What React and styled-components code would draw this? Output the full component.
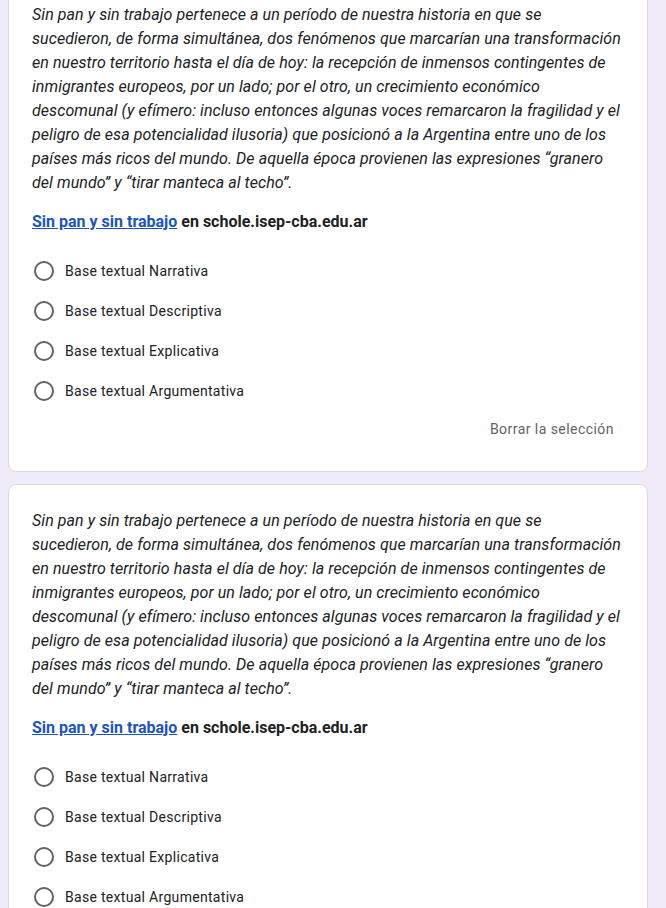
import React from "react";
import styled, { createGlobalStyle } from "styled-components";

const Global = createGlobalStyle`
	html, body {
		margin: 0;
		padding: 0;
		background: #f0ebf8;
		font-family: Roboto, "Noto Sans", Arial, sans-serif;
		overflow: hidden;
	}
`;

const Page = styled.div`
	display: flex;
	flex-direction: column;
	gap: 12px;
	width: 640px;
	margin: -22px 0 0 8px; /* la primera tarjeta viene cortada arriba */
`;

const Card = styled.div`
	background: #fff;
	border: 1px solid #dadce0;
	border-radius: 8px;
	padding: 24px 23px 0 23px;
	box-sizing: border-box;
`;

const Passage = styled.p`
	margin: 0;
	font-size: 16px;
	line-height: 24px;
	font-style: italic;
	color: #202124;
	letter-spacing: 0.07px;
`;

const Source = styled.div`
	margin-top: 15px;
	font-size: 16px;
	line-height: 24px;
	font-weight: 700;
	color: #202124;
`;

const Link = styled.a`
	color: #1a53c6;
	text-decoration: underline;
`;

const Options = styled.div`
	display: flex;
	flex-direction: column;
	margin-top: 17px;
`;

const Option = styled.label`
	display: flex;
	align-items: center;
	height: 40px;
	padding-left: 2px;
	font-size: 14px;
	color: #202124;
	letter-spacing: 0.3px;
	cursor: pointer;
`;

const Radio = styled.span`
	width: 20px;
	height: 20px;
	border: 2px solid #5f6368;
	border-radius: 50%;
	box-sizing: border-box;
	margin-right: 11px;
	flex-shrink: 0;
`;

const Footer = styled.div`
	display: flex;
	justify-content: flex-end;
	padding: 2px 10px 26px 0;
`;

const ClearButton = styled.button`
	border: none;
	background: transparent;
	font-family: inherit;
	font-size: 14px;
	font-weight: 400;
	letter-spacing: 0.45px;
	color: #5f6368;
	padding: 8px 0;
	cursor: pointer;
`;

const text = "Sin pan y sin trabajo pertenece a un período de nuestra historia en que se sucedieron, de forma simultánea, dos fenómenos que marcarían una transformación en nuestro territorio hasta el día de hoy: la recepción de inmensos contingentes de inmigrantes europeos, por un lado; por el otro, un crecimiento económico descomunal (y efímero: incluso entonces algunas voces remarcaron la fragilidad y el peligro de esa potencialidad ilusoria) que posicionó a la Argentina entre uno de los países más ricos del mundo. De aquella época provienen las expresiones “granero del mundo” y “tirar manteca al techo”.";

const choices = [
	"Base textual Narrativa",
	"Base textual Descriptiva",
	"Base textual Explicativa",
	"Base textual Argumentativa",
];

const Question = () => (
	<Card>
		<Passage>{text}</Passage>
		<Source>
			<Link href="#">Sin pan y sin trabajo</Link> en schole.isep-cba.edu.ar
		</Source>
		<Options>
			{choices.map((c) => (
				<Option key={c}>
					<Radio />
					{c}
				</Option>
			))}
		</Options>
		<Footer>
			<ClearButton>Borrar la selección</ClearButton>
		</Footer>
	</Card>
);

const App = () => {
	return (
		<>
			<Global />
			<Page>
				<Question />
				<Question />
			</Page>
		</>
	);
};

export default App;
